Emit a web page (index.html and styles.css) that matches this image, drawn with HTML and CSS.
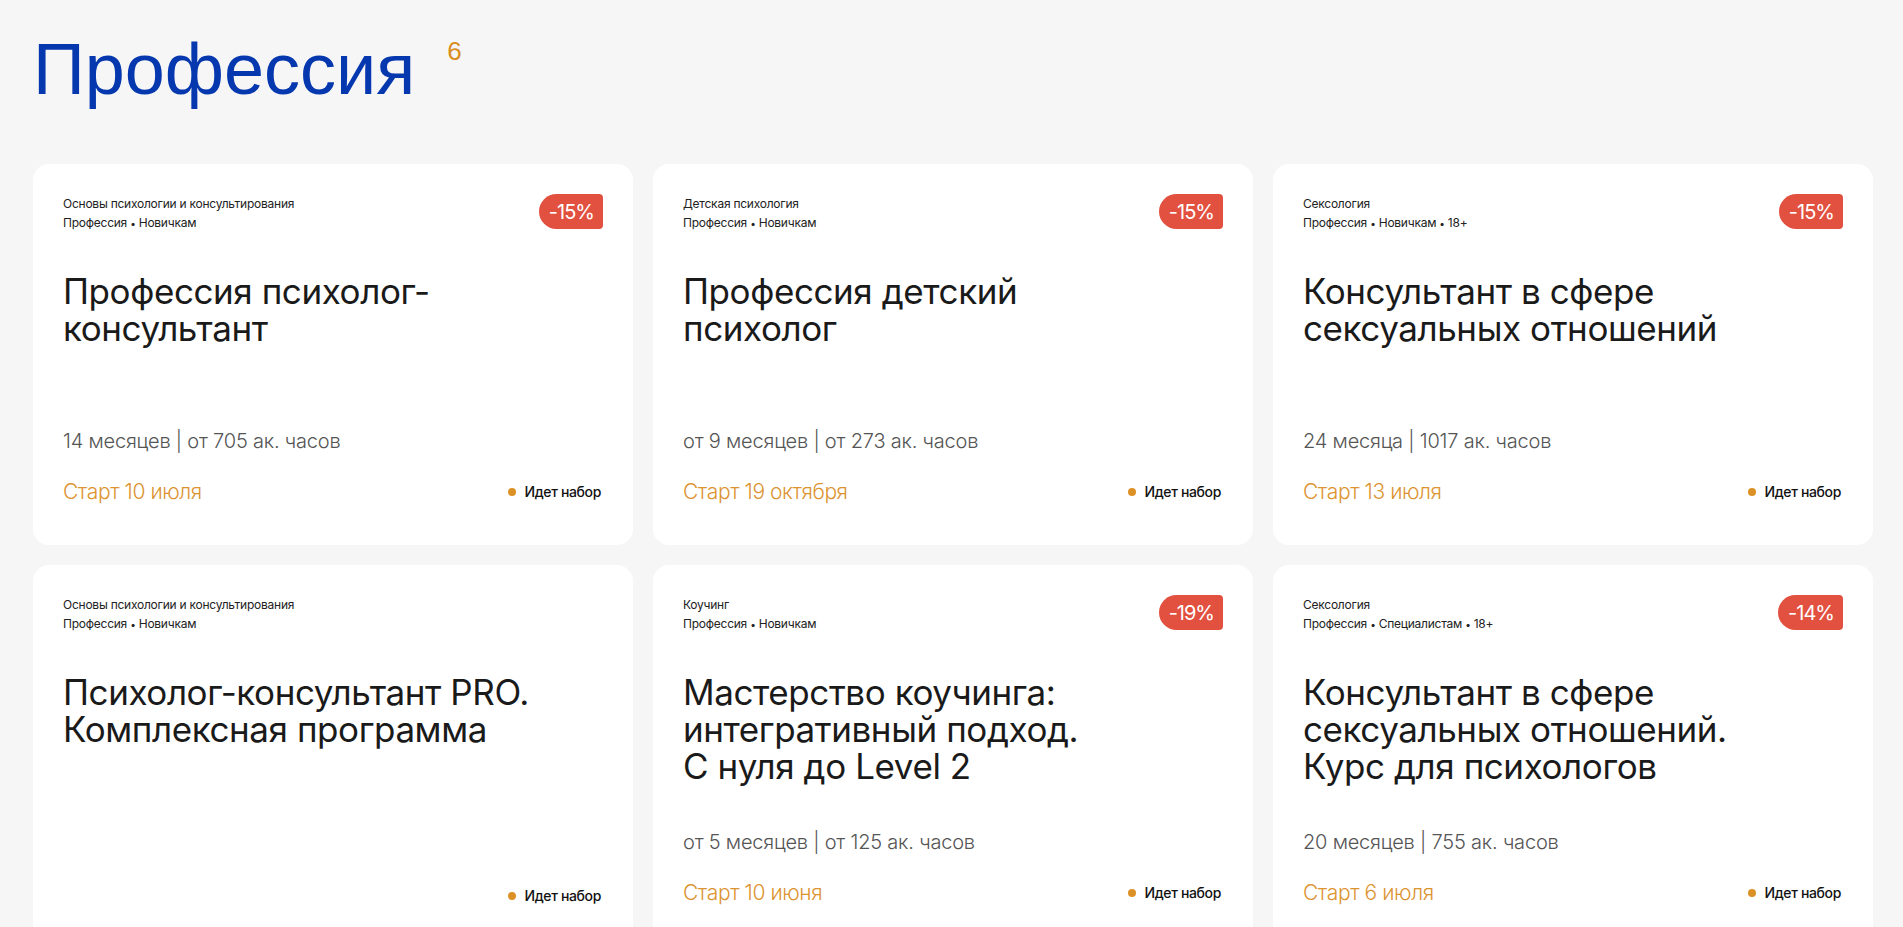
FILE: index.html
```html
<!DOCTYPE html>
<html lang="ru">
<head>
<meta charset="utf-8">
<title>Профессия</title>
<link rel="stylesheet" href="styles.css">
</head>
<body>
<div class="page">
  <div class="heading">
    <h1>Профессия</h1>
    <span class="count">6</span>
  </div>
  <div class="grid">
    <div class="card">
      <div class="card-head">
        <div class="meta"><div>Основы психологии и консультирования</div><div>Профессия <span class="sep">•</span> Новичкам</div></div>
        <span class="badge">-15%</span>
      </div>
      <h2 class="title">Профессия психолог-<br>консультант</h2>
      <div class="bottom">
        <div class="info">14 месяцев | от 705 ак. часов</div>
        <div class="foot"><span class="start">Старт 10 июля</span><span class="status"><i class="dot"></i>Идет набор</span></div>
      </div>
    </div>
    <div class="card">
      <div class="card-head">
        <div class="meta"><div>Детская психология</div><div>Профессия <span class="sep">•</span> Новичкам</div></div>
        <span class="badge">-15%</span>
      </div>
      <h2 class="title">Профессия детский<br>психолог</h2>
      <div class="bottom">
        <div class="info">от 9 месяцев | от 273 ак. часов</div>
        <div class="foot"><span class="start">Старт 19 октября</span><span class="status"><i class="dot"></i>Идет набор</span></div>
      </div>
    </div>
    <div class="card">
      <div class="card-head">
        <div class="meta"><div>Сексология</div><div>Профессия <span class="sep">•</span> Новичкам <span class="sep">•</span> 18+</div></div>
        <span class="badge">-15%</span>
      </div>
      <h2 class="title">Консультант в сфере<br>сексуальных отношений</h2>
      <div class="bottom">
        <div class="info">24 месяца | 1017 ак. часов</div>
        <div class="foot"><span class="start">Старт 13 июля</span><span class="status"><i class="dot"></i>Идет набор</span></div>
      </div>
    </div>
    <div class="card">
      <div class="card-head">
        <div class="meta"><div>Основы психологии и консультирования</div><div>Профессия <span class="sep">•</span> Новичкам</div></div>
      </div>
      <h2 class="title">Психолог-консультант PRO.<br>Комплексная программа</h2>
      <div class="bottom">
        <div class="foot"><span class="status"><i class="dot"></i>Идет набор</span></div>
      </div>
    </div>
    <div class="card">
      <div class="card-head">
        <div class="meta"><div>Коучинг</div><div>Профессия <span class="sep">•</span> Новичкам</div></div>
        <span class="badge">-19%</span>
      </div>
      <h2 class="title">Мастерство коучинга:<br>интегративный подход.<br>С нуля до Level 2</h2>
      <div class="bottom">
        <div class="info">от 5 месяцев | от 125 ак. часов</div>
        <div class="foot"><span class="start">Старт 10 июня</span><span class="status"><i class="dot"></i>Идет набор</span></div>
      </div>
    </div>
    <div class="card">
      <div class="card-head">
        <div class="meta"><div>Сексология</div><div>Профессия <span class="sep">•</span> Специалистам <span class="sep">•</span> 18+</div></div>
        <span class="badge">-14%</span>
      </div>
      <h2 class="title">Консультант в сфере<br>сексуальных отношений.<br>Курс для психологов</h2>
      <div class="bottom">
        <div class="info">20 месяцев | 755 ак. часов</div>
        <div class="foot"><span class="start">Старт 6 июля</span><span class="status"><i class="dot"></i>Идет набор</span></div>
      </div>
    </div>
  </div>
</div>
</body>
</html>
```
FILE: styles.css
```css
html, body {
  margin: 0;
  padding: 0;
}
body {
  background: #f6f6f6;
  font-family: Inter, "Noto Sans", sans-serif;
  color: #1b1b1b;
}
.page {
  padding: 33px 30px 40px 33px;
}
.heading {
  display: flex;
  align-items: flex-start;
  margin: 0 0 59px;
}
.heading h1 {
  margin: 0;
  font-family: "Liberation Sans", Arial, sans-serif;
  font-weight: 400;
  font-size: 72px;
  line-height: 72px;
  color: #0537ae;
}
.count {
  font-family: "Liberation Sans", Arial, sans-serif;
  font-size: 26px;
  line-height: 26px;
  color: #d98e1f;
  margin: 5px 0 0 32px;
}
.grid {
  display: grid;
  grid-template-columns: repeat(3, 1fr);
  gap: 20px;
}
.card {
  background: #fff;
  border-radius: 16px;
  height: 381px;
  box-sizing: border-box;
  padding: 30px 30px 41px;
  display: flex;
  flex-direction: column;
}
.card-head {
  display: flex;
  justify-content: space-between;
  align-items: flex-start;
}
.meta {
  font-size: 12px;
  line-height: 19px;
  color: #222;
  letter-spacing: -0.02em;
}
.sep {
  font-size: 10px;
}
.badge {
  margin-top: 0;
  height: 35px;
  box-sizing: border-box;
  padding: 0 9px 0 10px;
  display: flex;
  align-items: center;
  background: #e2503f;
  color: #fff;
  font-size: 20px;
  letter-spacing: -0.05em;
  border-radius: 18px 4px 4px 18px;
}
.title {
  margin: 40px 0 0;
  font-weight: 400;
  font-size: 35px;
  line-height: 37px;
  letter-spacing: -0.012em;
  color: #1a1a1a;
}
.bottom {
  margin-top: auto;
}
.info {
  font-size: 20px;
  line-height: 24px;
  font-weight: 300;
  color: #555;
  letter-spacing: -0.01em;
  margin-bottom: 26px;
}
.foot {
  display: flex;
  align-items: center;
  justify-content: space-between;
}
.start {
  font-size: 21px;
  line-height: 25px;
  font-weight: 300;
  color: #dc9432;
  letter-spacing: -0.02em;
}
.status {
  margin-left: auto;
  margin-right: 2px;
  display: flex;
  align-items: center;
  gap: 8px;
  font-size: 14px;
  line-height: 18px;
  font-weight: 500;
  color: #111;
  letter-spacing: -0.025em;
}
.dot {
  width: 8px;
  height: 8px;
  border-radius: 50%;
  background: #dc9126;
}
```
